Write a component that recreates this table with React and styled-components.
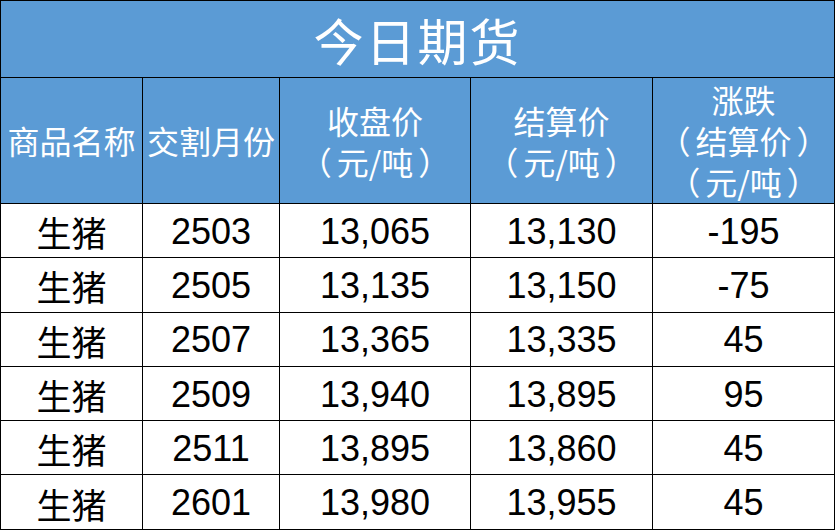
import React from 'react';
import styled, { createGlobalStyle } from 'styled-components';

const GlobalStyle = createGlobalStyle`
  html, body {
    margin: 0;
    padding: 0;
    background: #ffffff;
  }
`;

const cjk = `"Noto Sans CJK SC", "Noto Sans", sans-serif`;

const Table = styled.table`
  width: 835px;
  border-collapse: collapse;
  table-layout: fixed;
  font-family: ${cjk};
`;

const TitleCell = styled.th`
  height: 76px;
  padding: 0;
  background: #5b9bd5;
  border: 1px solid #000;
  color: #ffffff;
  font-size: 50px;
  font-weight: 400;
  letter-spacing: 2px;
  text-align: center;
  vertical-align: middle;
  line-height: 1;
`;

const HeadCell = styled.th`
  height: 125px;
  padding: 0;
  background: #5b9bd5;
  border: 1px solid #000;
  color: #ffffff;
  font-size: 32px;
  font-weight: 400;
  line-height: 41px;
  text-align: center;
  vertical-align: middle;
  white-space: nowrap;
`;

const HeadLine = styled.div`
  height: 41px;
  line-height: 41px;
  overflow: visible;
`;

const Paren = styled.span`
  display: inline-block;
  height: 41px;
  margin: ${({ $open }) => ($open ? '0 5px 0 0' : '0 0 0 5px')};
`;

const Unit = ({ children }) => (
  <HeadLine>
    <Paren $open>（</Paren>
    {children}
    <Paren>）</Paren>
  </HeadLine>
);

const Cell = styled.td`
  height: 51.3px;
  padding: 2px 0 0 0;
  border: 1px solid #000;
  color: #000;
  background: #fff;
  text-align: center;
  vertical-align: middle;
  font-size: ${({ $cjk }) => ($cjk ? '35px' : '36px')};
  font-family: ${({ $cjk }) => ($cjk ? cjk : `"Liberation Sans", Arial, sans-serif`)};
  line-height: 1;
`;

const widths = [142, 137, 191, 182, 182];

const rows = [
  ['2503', '13,065', '13,130', '-195'],
  ['2505', '13,135', '13,150', '-75'],
  ['2507', '13,365', '13,335', '45'],
  ['2509', '13,940', '13,895', '95'],
  ['2511', '13,895', '13,860', '45'],
  ['2601', '13,980', '13,955', '45'],
];

export default function App() {
  return (
    <>
      <GlobalStyle />
      <Table>
        <colgroup>
          {widths.map((w, i) => (
            <col key={i} style={{ width: w }} />
          ))}
        </colgroup>
        <thead>
          <tr>
            <TitleCell colSpan={5}>今日期货</TitleCell>
          </tr>
          <tr>
            <HeadCell>商品名称</HeadCell>
            <HeadCell>交割月份</HeadCell>
            <HeadCell>
              <HeadLine>收盘价</HeadLine>
              <Unit>元/吨</Unit>
            </HeadCell>
            <HeadCell>
              <HeadLine>结算价</HeadLine>
              <Unit>元/吨</Unit>
            </HeadCell>
            <HeadCell>
              <HeadLine>涨跌</HeadLine>
              <Unit>结算价</Unit>
              <Unit>元/吨</Unit>
            </HeadCell>
          </tr>
        </thead>
        <tbody>
          {rows.map((r, i) => (
            <tr key={i}>
              <Cell $cjk>生猪</Cell>
              {r.map((v, j) => (
                <Cell key={j}>{v}</Cell>
              ))}
            </tr>
          ))}
        </tbody>
      </Table>
    </>
  );
}
